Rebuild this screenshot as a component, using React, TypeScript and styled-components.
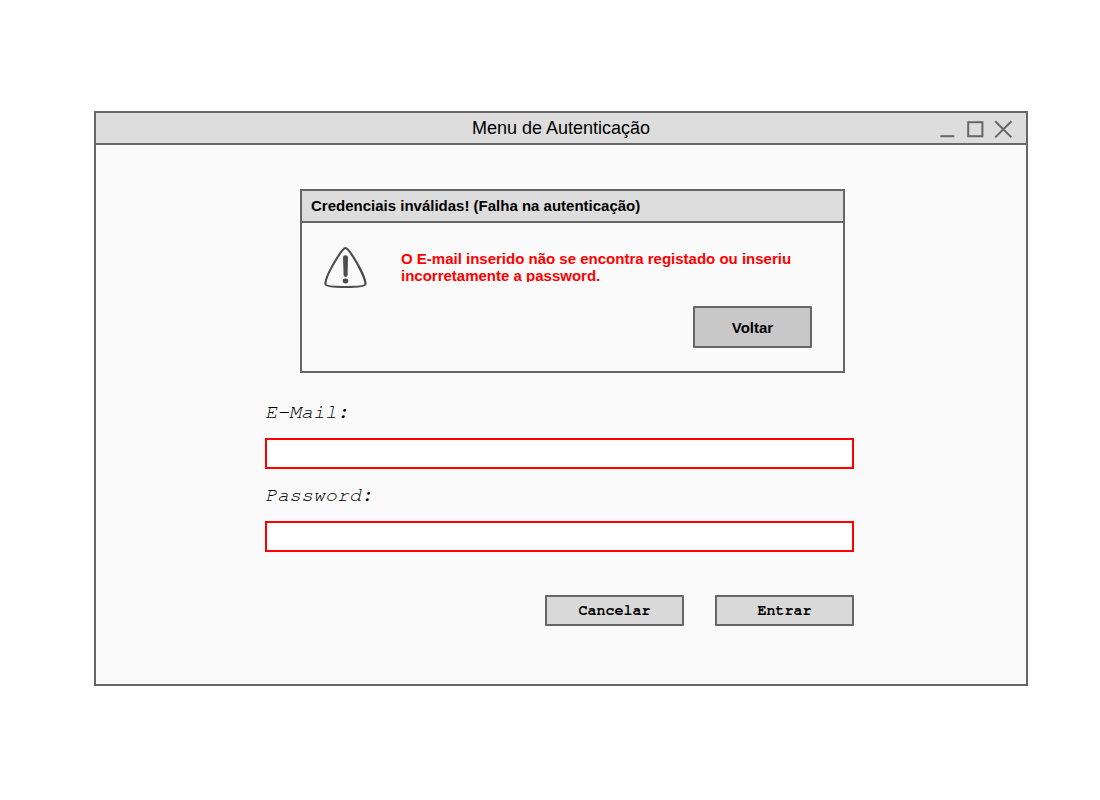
import React from "react";
import styled, { createGlobalStyle, css } from "styled-components";

const line = "#666666";
const sans = `"Liberation Sans", Arial, sans-serif`;
const mono = `"FreeMono", "Liberation Mono", "Courier New", monospace`;

const GlobalStyle = createGlobalStyle`
  *, *::before, *::after { box-sizing: border-box; }
  body {
    margin: 0;
    background: #ffffff;
    color: #000000;
    font-family: ${sans};
  }
`;

const Page = styled.main`
  padding: 111px 72px 114px 94px;
`;

const Window = styled.section`
  border: 2px solid ${line};
  background: #fafafa;
`;

const TitleBar = styled.header`
  display: grid;
  grid-template-columns: 1fr auto 1fr;
  align-items: center;
  height: 32px;
  border-bottom: 2px solid ${line};
  background: #dddddd;
`;

const Title = styled.h1`
  grid-column: 2;
  margin: 0;
  font-size: 18px;
  line-height: 24px;
  font-weight: 400;
`;

const Controls = styled.div`
  display: flex;
  justify-content: flex-end;
  gap: 8px;
  padding: 2px 13px 0 0;
`;

const ControlButton = styled.button`
  display: block;
  width: 20px;
  height: 20px;
  padding: 0;
  border: 0;
  background: none;
  svg { display: block; }
`;

const Content = styled.div`
  padding: 44px 172px 58px 169px;
`;

const Dialog = styled.section`
  margin: 0 9px 0 35px;
  border: 2px solid ${line};
`;

const DialogTitle = styled.h2`
  margin: 0;
  padding: 0 9px;
  height: 32px;
  border-bottom: 2px solid ${line};
  background: #dddddd;
  font-size: 15px;
  line-height: 30px;
  font-weight: 700;
`;

const DialogBody = styled.div`
  display: flex;
  align-items: flex-start;
  gap: 33px;
  padding: 22px 31px 0 21px;
`;

const WarningIcon = styled.svg`
  flex: none;
  display: block;
`;

const Message = styled.p`
  margin: 5px 0 0;
  max-height: 32px;
  overflow: hidden;
  color: #ff0000;
  font-size: 15px;
  line-height: 17px;
  font-weight: 700;
`;

const DialogActions = styled.div`
  display: flex;
  justify-content: flex-end;
  padding: 16px 31px 23px;
`;

const Button = styled.button<{ $large?: boolean }>`
  padding: 0;
  border: 2px solid ${line};
  border-radius: 1px;
  color: #000000;
  font-size: 15px;
  font-weight: 700;
  ${({ $large }) =>
    $large
      ? css`
          width: 119px;
          height: 42px;
          background: #c8c8c8;
          font-family: ${sans};
        `
      : css`
          width: 139px;
          height: 31px;
          background: #d9d9d9;
          font-family: ${mono};
        `}
`;

const Form = styled.form`
  display: flex;
  flex-direction: column;
  gap: 14px;
  padding-top: 27px;
`;

const Field = styled.div`
  display: flex;
  flex-direction: column;
  gap: 14px;
`;

const Label = styled.label`
  font-family: ${mono};
  font-size: 20px;
  line-height: 24px;
  font-style: italic;
`;

const Input = styled.input<{ $invalid?: boolean }>`
  width: 100%;
  height: 31px;
  padding: 0 8px;
  border: 2px solid ${({ $invalid }) => ($invalid ? "#ff0000" : line)};
  border-radius: 0;
  background: #ffffff;
  font-family: ${mono};
  font-size: 15px;
  outline: none;
`;

const FormActions = styled.div`
  display: flex;
  justify-content: flex-end;
  gap: 31px;
  padding-top: 29px;
`;

export default function App() {
  return (
    <>
      <GlobalStyle />
      <Page>
        <Window>
          <TitleBar>
            <Title>Menu de Autenticação</Title>
            <Controls>
              <ControlButton type="button" aria-label="Minimizar">
                <svg width="20" height="20" viewBox="0 0 20 20" fill="none" stroke={line} strokeWidth="2">
                  <path d="M3.300 17.200H17.300" />
                </svg>
              </ControlButton>
              <ControlButton type="button" aria-label="Maximizar">
                <svg width="20" height="20" viewBox="0 0 20 20" fill="none" stroke={line} strokeWidth="2">
                  <rect x="3.200" y="3.200" width="14.200" height="14" />
                </svg>
              </ControlButton>
              <ControlButton type="button" aria-label="Fechar">
                <svg width="20" height="20" viewBox="0 0 20 20" fill="none" stroke={line} strokeWidth="2">
                  <path d="M2.200 2.200L18.400 18.400M18.400 2.200L2.200 18.400" />
                </svg>
              </ControlButton>
            </Controls>
          </TitleBar>
          <Content>
            <Dialog role="alertdialog" aria-labelledby="error-title" aria-describedby="error-text">
              <DialogTitle id="error-title">Credenciais inválidas! (Falha na autenticação)</DialogTitle>
              <DialogBody>
                <WarningIcon width="45" height="45" viewBox="0 0 45 45" aria-hidden="true">
                  <path
                    d="M22.500 3C20.500 3 18.500 6 15 11.500C9 21 2.400 34 2.400 39C2.400 41.500 12 42 22.500 42C33 42 42.500 41.500 42.500 39C42.500 34 36 21 30 11.500C26.500 6 24.500 3 22.500 3Z"
                    fill="none"
                    stroke="#4d4d4d"
                    strokeWidth="2.200"
                  />
                  <path
                    d="M20 12.500C20 9.500 25 9.500 25 12.500L24.600 30C24.300 32.500 21 32.500 20.600 30Z"
                    fill="#4d4d4d"
                  />
                  <ellipse cx="22.500" cy="36" rx="2.800" ry="2.400" fill="#4d4d4d" />
                </WarningIcon>
                <Message id="error-text">
                  O E-mail inserido não se encontra registado ou inseriu incorretamente a password.
                </Message>
              </DialogBody>
              <DialogActions>
                <Button type="button" $large>Voltar</Button>
              </DialogActions>
            </Dialog>
            <Form onSubmit={(e) => e.preventDefault()}>
              <Field>
                <Label htmlFor="email">E-Mail<b>:</b></Label>
                <Input id="email" type="email" $invalid aria-invalid="true" />
              </Field>
              <Field>
                <Label htmlFor="password">Password<b>:</b></Label>
                <Input id="password" type="password" $invalid aria-invalid="true" />
              </Field>
              <FormActions>
                <Button type="button">Cancelar</Button>
                <Button type="submit">Entrar</Button>
              </FormActions>
            </Form>
          </Content>
        </Window>
      </Page>
    </>
  );
}
